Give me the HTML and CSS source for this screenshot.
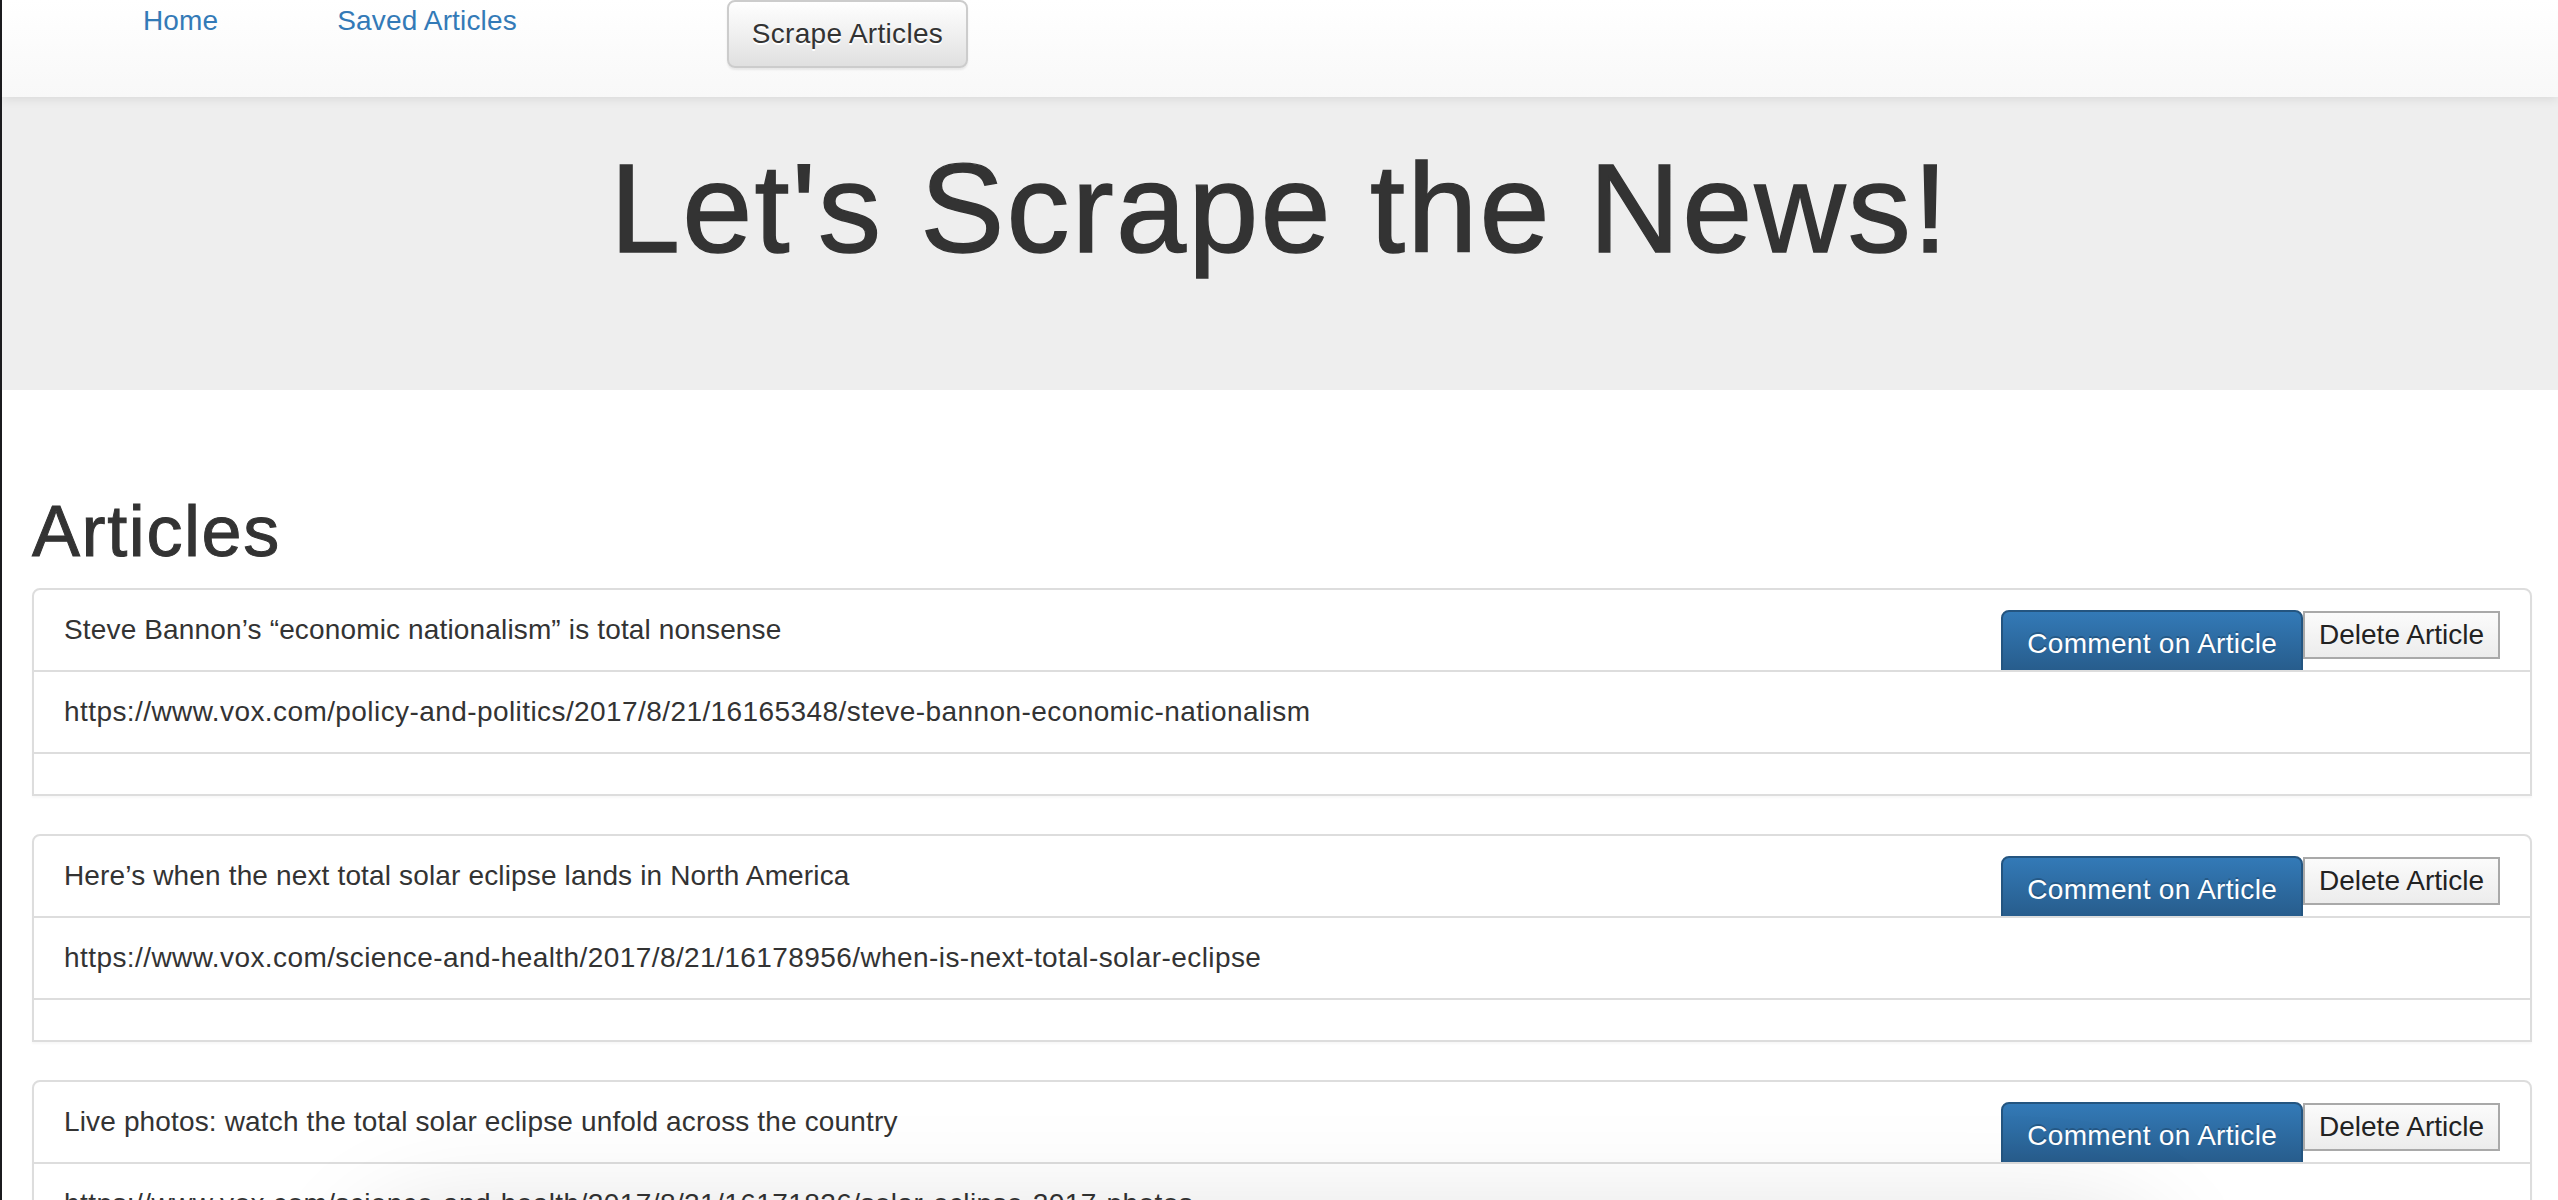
FILE: index.html
```html
<!DOCTYPE html>
<html lang="en">
<head>
<meta charset="utf-8">
<title>News Scraper</title>
<link rel="stylesheet" href="styles.css">
</head>
<body>
<nav class="navbar">
  <a class="nav-link nav-home" href="#">Home</a>
  <a class="nav-link nav-saved" href="#">Saved Articles</a>
  <button class="btn-scrape" type="button">Scrape Articles</button>
</nav>

<header class="jumbotron">
  <h1 class="jumbo-title">Let's Scrape the News!</h1>
</header>

<main class="container">
  <h2 class="section-title">Articles</h2>

  <section class="article">
    <div class="art-head">
      <span class="art-title">Steve Bannon’s “economic nationalism” is total nonsense</span>
      <div class="art-actions">
        <button class="btn-comment" type="button">Comment on Article</button>
        <button class="btn-delete" type="button">Delete Article</button>
      </div>
    </div>
    <div class="art-row art-url">https://www.vox.com/policy-and-politics/2017/8/21/16165348/steve-bannon-economic-nationalism</div>
    <div class="art-row art-row-empty"></div>
  </section>

  <section class="article">
    <div class="art-head">
      <span class="art-title">Here’s when the next total solar eclipse lands in North America</span>
      <div class="art-actions">
        <button class="btn-comment" type="button">Comment on Article</button>
        <button class="btn-delete" type="button">Delete Article</button>
      </div>
    </div>
    <div class="art-row art-url">https://www.vox.com/science-and-health/2017/8/21/16178956/when-is-next-total-solar-eclipse</div>
    <div class="art-row art-row-empty"></div>
  </section>

  <section class="article">
    <div class="art-head">
      <span class="art-title">Live photos: watch the total solar eclipse unfold across the country</span>
      <div class="art-actions">
        <button class="btn-comment" type="button">Comment on Article</button>
        <button class="btn-delete" type="button">Delete Article</button>
      </div>
    </div>
    <div class="art-row art-url">https://www.vox.com/science-and-health/2017/8/21/16171826/solar-eclipse-2017-photos</div>
    <div class="art-row art-row-empty"></div>
  </section>
</main>

<div class="dock-shadow"></div>
</body>
</html>
```

FILE: styles.css
```css
html {
  overflow: hidden;
}

body {
  margin: 0;
  min-height: 100vh;
  border-left: 2px solid #1b1b1e;
  font-family: "Liberation Sans", Arial, Helvetica, sans-serif;
  font-size: 28px;
  line-height: 40px;
  letter-spacing: 0.3px;
  color: #333;
  background: #fff;
}

/* ---------- navbar ---------- */
.navbar {
  position: relative;
  z-index: 2;
  display: flex;
  align-items: flex-start;
  height: 97px;
  background: linear-gradient(to bottom, #ffffff 0%, #f8f8f8 100%);
  box-shadow: 0 2px 10px rgba(0, 0, 0, 0.09);
}

.nav-link {
  padding-top: 1px;
  color: #337ab7;
  text-decoration: none;
  line-height: 40px;
  letter-spacing: 0.15px;
}

.nav-home {
  margin-left: 141px;
}

.nav-saved {
  margin-left: 119px;
}

.btn-scrape {
  margin-left: 210px;
  padding: 12px 23px;
  border: 2px solid #ccc;
  border-radius: 8px;
  background: linear-gradient(to bottom, #ffffff 0%, #e0e0e0 100%);
  box-shadow: inset 0 2px 0 rgba(255, 255, 255, 0.15), 0 2px 2px rgba(0, 0, 0, 0.075);
  color: #333;
  font-family: inherit;
  font-size: 28px;
  line-height: 40px;
  letter-spacing: 0.3px;
  text-shadow: 0 2px 0 #fff;
}

/* ---------- jumbotron ---------- */
.jumbotron {
  box-sizing: border-box;
  height: 293px;
  padding-top: 43px;
  background: #eee;
  text-align: center;
}

.jumbo-title {
  margin: 0;
  font-size: 126px;
  line-height: 138.6px;
  font-weight: normal;
  letter-spacing: 2.2px;
  -webkit-text-stroke: 1.4px #333;
  color: #333;
}

/* ---------- articles ---------- */
.container {
  margin: 0 26px 0 30px;
}

.section-title {
  margin: 102px 0 17px;
  font-size: 72px;
  line-height: 79px;
  font-weight: normal;
  letter-spacing: 1.6px;
  -webkit-text-stroke: 1px #333;
  color: #333;
}

.article {
  margin-bottom: 38px;
  border: 2px solid #ddd;
  border-radius: 8px 8px 0 0;
  background: #fff;
  box-shadow: 0 2px 2px rgba(0, 0, 0, 0.03);
}

.art-head {
  box-sizing: border-box;
  display: flex;
  justify-content: space-between;
  align-items: flex-start;
  height: 80px;
  padding: 20px 30px;
}

.art-title {
  line-height: 40px;
  letter-spacing: 0.15px;
}

.art-actions {
  display: flex;
  align-items: flex-start;
}

.btn-comment {
  padding: 12px 24px;
  border: 2px solid #245580;
  border-radius: 8px;
  background: linear-gradient(to bottom, #337ab7 0%, #265a88 100%);
  color: #fff;
  font-family: inherit;
  font-size: 28px;
  line-height: 40px;
  letter-spacing: 0.3px;
  text-shadow: 0 -2px 0 rgba(0, 0, 0, 0.2);
}

.btn-delete {
  margin-top: 1px;
  padding: 6px 14px;
  border: 2px solid #a9a9a9;
  border-radius: 0;
  background: linear-gradient(to bottom, #fbfbfb 0%, #ececec 100%);
  color: #222;
  font-family: inherit;
  font-size: 28px;
  line-height: 32px;
}

.art-row {
  position: relative;
  padding: 20px 30px;
  border-top: 2px solid #ddd;
  background: #fff;
  line-height: 40px;
}

.art-url {
  letter-spacing: 0.42px;
}

.art-row-empty {
  height: 0;
}

/* ---------- blurred overlay at bottom edge ---------- */
.dock-shadow {
  position: fixed;
  left: 400px;
  top: 1260px;
  width: 1720px;
  height: 200px;
  border-radius: 40px;
  background: #ddd;
  box-shadow: 0 0 110px 45px rgba(0, 0, 0, 0.13);
  z-index: 5;
}
```
